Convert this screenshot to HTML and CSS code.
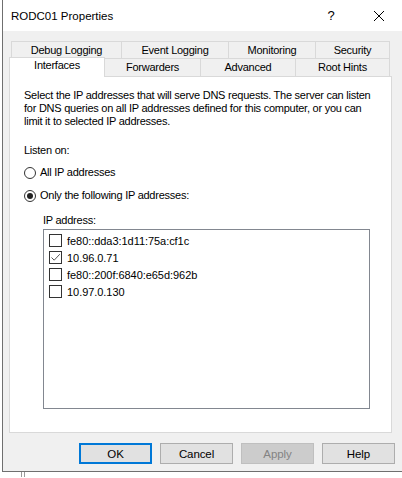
FILE: index.html
```html
<!DOCTYPE html>
<html lang="en">
<head>
    <meta charset="UTF-8">
    <title>RODC01 Properties</title>
    <link rel="stylesheet" href="styles.css">
</head>
<body>
    <div class="window">
        <div class="titlebar">
            <span class="title">RODC01 Properties</span>
            <span class="help-btn">?</span>
            <span class="close-btn">
                <svg width="12" height="12" viewBox="0 0 12 12"><path d="M1 1 L11 11 M11 1 L1 11" stroke="#000" stroke-width="1" fill="none"/></svg>
            </span>
        </div>

        <div class="dialog">
            <div class="tab-row back">
                <div class="tab w-debug">Debug Logging</div>
                <div class="tab w-event">Event Logging</div>
                <div class="tab w-mon">Monitoring</div>
                <div class="tab w-sec">Security</div>
            </div>
            <div class="tab-row front">
                <div class="tab w-intf selected">Interfaces</div>
                <div class="tab w-fwd">Forwarders</div>
                <div class="tab w-adv">Advanced</div>
                <div class="tab w-root">Root Hints</div>
            </div>

            <div class="panel">
                <p class="intro">Select the IP addresses that will serve DNS requests. The server can listen for DNS queries on all IP addresses defined for this computer, or you can limit it to selected IP addresses.</p>

                <div class="listen-label">Listen on:</div>

                <label class="radio-row">
                    <span class="radio"></span>
                    All IP addresses
                </label>
                <label class="radio-row">
                    <span class="radio on"></span>
                    Only the following IP addresses:
                </label>

                <div class="ip-label">IP address:</div>
                <div class="ip-list">
                    <div class="ip-item"><span class="check"></span>fe80::dda3:1d11:75a:cf1c</div>
                    <div class="ip-item"><span class="check on">
                        <svg width="11" height="11" viewBox="0 0 11 11"><path d="M1.5 5.5 L4.2 8.2 L9.8 2.2" stroke="#555" stroke-width="1" fill="none"/></svg>
                    </span>10.96.0.71</div>
                    <div class="ip-item"><span class="check"></span>fe80::200f:6840:e65d:962b</div>
                    <div class="ip-item"><span class="check"></span>10.97.0.130</div>
                </div>
            </div>

            <div class="buttons">
                <button class="btn default">OK</button>
                <button class="btn">Cancel</button>
                <button class="btn" disabled>Apply</button>
                <button class="btn">Help</button>
            </div>
        </div>
    </div>
    <div class="shadow-mark"></div>
</body>
</html>
```

FILE: styles.css
```css
body {
    margin: 0;
    background: #fff;
    font-family: "Liberation Sans", Arial, sans-serif;
    font-size: 11px;
    letter-spacing: -0.25px;
    color: #000;
}
.window {
    margin-left: 2px;
    width: 400px;
    height: 471px;
    border-left: 1px solid #6f6f6f;
    border-bottom: 1px solid #6f6f6f;
    display: flex;
    flex-direction: column;
}
.titlebar {
    height: 31px;
    background: #fff;
    display: flex;
    align-items: center;
}
.title {
    margin-left: 8px;
    flex: 1;
    font-size: 11.5px;
    letter-spacing: 0;
}
.help-btn {
    width: 12px;
    margin-right: 36px;
    font-size: 13px;
    text-align: center;
}
.close-btn {
    display: flex;
    margin-right: 18px;
}
.dialog {
    flex: 1;
    background: #f0f0f0;
    padding: 10px 8px 0 6px;
}
.tab-row {
    display: flex;
    height: 18px;
}
.tab-row.back {
    margin-left: 2px;
    height: 17px;
}
.tab {
    box-sizing: border-box;
    height: 100%;
    border: 1px solid #d9d9d9;
    border-bottom: none;
    border-left: none;
    background: #f0f0f0;
    text-align: center;
    line-height: 17px;
}
.tab-row.back .tab:first-child {
    border-left: 1px solid #d9d9d9;
}
.tab.selected {
    position: relative;
    z-index: 1;
    background: #fff;
    border-left: 1px solid #d9d9d9;
    height: 20px;
    margin-top: -1px;
    line-height: 15px;
}
.w-debug { width: 111px; }
.w-event { width: 107px; }
.w-mon { width: 87px; }
.w-sec { width: 74px; }
.w-intf { width: 96px; }
.w-fwd { width: 96px; }
.w-adv { width: 95px; }
.w-root { width: 94px; }

.panel {
    box-sizing: border-box;
    width: 383px;
    height: 357px;
    background: #fff;
    border: 1px solid #d9d9d9;
    padding: 12px 10px 0 14px;
}
.intro {
    margin: 0;
    line-height: 13px;
}
.listen-label {
    margin-top: 16px;
    line-height: 13px;
}
.radio-row {
    display: flex;
    align-items: center;
    height: 23px;
    line-height: 13px;
}
.radio-row:first-of-type {
    margin-top: 4px;
}
.radio {
    box-sizing: border-box;
    width: 12px;
    height: 12px;
    border: 1px solid #333;
    border-radius: 50%;
    margin-right: 4px;
    display: flex;
    align-items: center;
    justify-content: center;
}
.radio.on::after {
    content: "";
    width: 6px;
    height: 6px;
    border-radius: 50%;
    background: #222;
}
.ip-label {
    margin: 7px 0 0 19px;
    line-height: 13px;
}
.ip-list {
    box-sizing: border-box;
    width: 327px;
    height: 180px;
    margin: 2px 0 0 19px;
    border: 1px solid #828790;
    padding: 2px 0 0 5px;
    letter-spacing: -0.05px;
}
.ip-item {
    display: flex;
    align-items: center;
    height: 17px;
}
.check {
    box-sizing: border-box;
    width: 13px;
    height: 13px;
    border: 1px solid #333;
    background: #fff;
    margin-right: 5px;
    display: flex;
}
.buttons {
    display: flex;
    justify-content: flex-end;
    gap: 8px;
    margin-top: 10px;
}
.btn {
    box-sizing: border-box;
    width: 73px;
    height: 21px;
    background: #e1e1e1;
    border: 1px solid #adadad;
    font-family: inherit;
    font-size: 11.5px;
    letter-spacing: -0.1px;
    color: #000;
    padding: 0;
}
.btn.default {
    border: 2px solid #0078d7;
}
.btn:disabled {
    background: #cccccc;
    border-color: #bfbfbf;
    color: #838383;
}
.shadow-mark {
    margin-left: 21px;
    width: 2px;
    height: 5px;
    border-left: 1px solid #9a9a9a;
    border-right: 1px solid #9a9a9a;
}
```
